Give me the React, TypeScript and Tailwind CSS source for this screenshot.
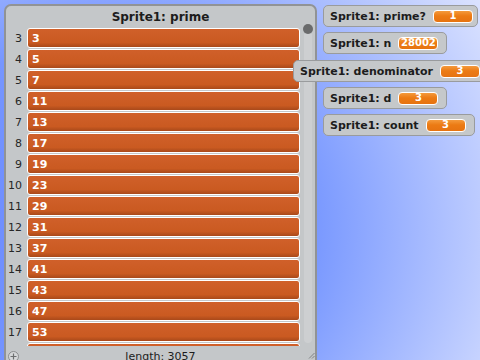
import React from "react";

// ─── Data ────────────────────────────────────────────────────────────────────

const primes = [3, 5, 7, 11, 13, 17, 19, 23, 29, 31, 37, 41, 43, 47, 53, 59];

const monitors = [
  { label: "Sprite1: prime?", value: "1", pos: "left-[323px] top-[5px] w-[155px]" },
  { label: "Sprite1: n", value: "28002", pos: "left-[323px] top-[32px] w-[124px]" },
  { label: "Sprite1: denominator", value: "3", pos: "left-[293px] top-[60px] w-[196px]" },
  { label: "Sprite1: d", value: "3", pos: "left-[323px] top-[87px] w-[124px]" },
  { label: "Sprite1: count", value: "3", pos: "left-[323px] top-[114px] w-[152px]" },
];

// ─── Variable monitor ────────────────────────────────────────────────────────

function VarMonitor({ label, value, pos }: { label: string; value: string; pos: string }) {
  return (
    <div
      className={`absolute ${pos} h-[22px] flex items-center gap-[7px] pl-[6px] rounded-[5px] border border-[#999b9d] bg-[#c5c8ca]`}
    >
      <span className="text-[11px] font-bold leading-none text-[#1c1c1c] whitespace-nowrap">{label}</span>
      <span className="h-[13px] min-w-[40px] px-[1px] flex items-center justify-center rounded-[4px] border border-white bg-[linear-gradient(#f49a3c,#ec7b14_45%,#e67311)] text-[10px] font-bold leading-none text-white">
        {value}
      </span>
    </div>
  );
}

// ─── List monitor ────────────────────────────────────────────────────────────

function ListMonitor() {
  return (
    <div className="absolute left-[4px] top-[4px] w-[313px] h-[372px] flex flex-col rounded-[7px] border-2 border-[#919395] bg-[#c4c7c9]">
      {/* title */}
      <div className="h-[21px] shrink-0 flex items-center justify-center text-[12px] font-bold text-[#1c1c1c]">
        Sprite1: prime
      </div>

      {/* rows + scrollbar */}
      <div className="h-[319px] shrink-0 flex">
        <div className="flex flex-col gap-[1px] pt-[1px] overflow-hidden">
          {primes.map((p, i) => (
            <div key={i} className="h-[20px] shrink-0 flex items-center">
              <span className="w-[16px] text-right text-[11px] leading-none text-[#262626]">{i + 3}</span>
              <div className="ml-[5px] w-[273px] h-[20px] flex items-center pl-[4px] rounded-[3px] border border-white bg-[linear-gradient(#d0602a,#ca5a21_75%,#a9491a)] text-[11px] font-bold leading-none text-white">
                {p}
              </div>
            </div>
          ))}
        </div>
        <div className="ml-[3px] w-[10px] flex flex-col">
          <div className="-mt-[3px] w-[10px] h-[10px] shrink-0 rounded-full bg-[#6a6b6c]" />
          <div className="mx-[1px] mb-[3px] flex-1 rounded-b-[4px] bg-[#cdcfd1]" />
        </div>
      </div>

      {/* footer */}
      <div className="relative h-[22px] flex items-center justify-center text-[11px] text-[#1c1c1c]">
        <span className="absolute left-[2px] top-[5px] w-[11px] h-[11px] rounded-full border border-[#8c8e90] bg-[#d6d8da] flex items-center justify-center">
          <svg width="7" height="7" viewBox="0 0 7 7">
            <path d="M3.5 0.5v6M0.5 3.5h6" stroke="#6c6e70" strokeWidth="1.2" />
          </svg>
        </span>
        length: 3057
        <svg className="absolute right-[0px] top-[6px]" width="7" height="7" viewBox="0 0 7 7">
          <path d="M6.5 1L1 6.5M6.5 4L4 6.5" stroke="#808284" strokeWidth="1" />
        </svg>
      </div>
    </div>
  );
}

// ─── Stage ───────────────────────────────────────────────────────────────────

export default function App() {
  return (
    <div className="relative w-[480px] h-[360px] overflow-hidden font-['DejaVu_Sans',sans-serif] bg-[radial-gradient(ellipse_460px_420px_at_100px_230px,#6a89ff_0%,#7696ff_45%,#dde4ff_100%)]">
      <ListMonitor />
      {monitors.map((m) => (
        <VarMonitor key={m.label} {...m} />
      ))}
    </div>
  );
}
